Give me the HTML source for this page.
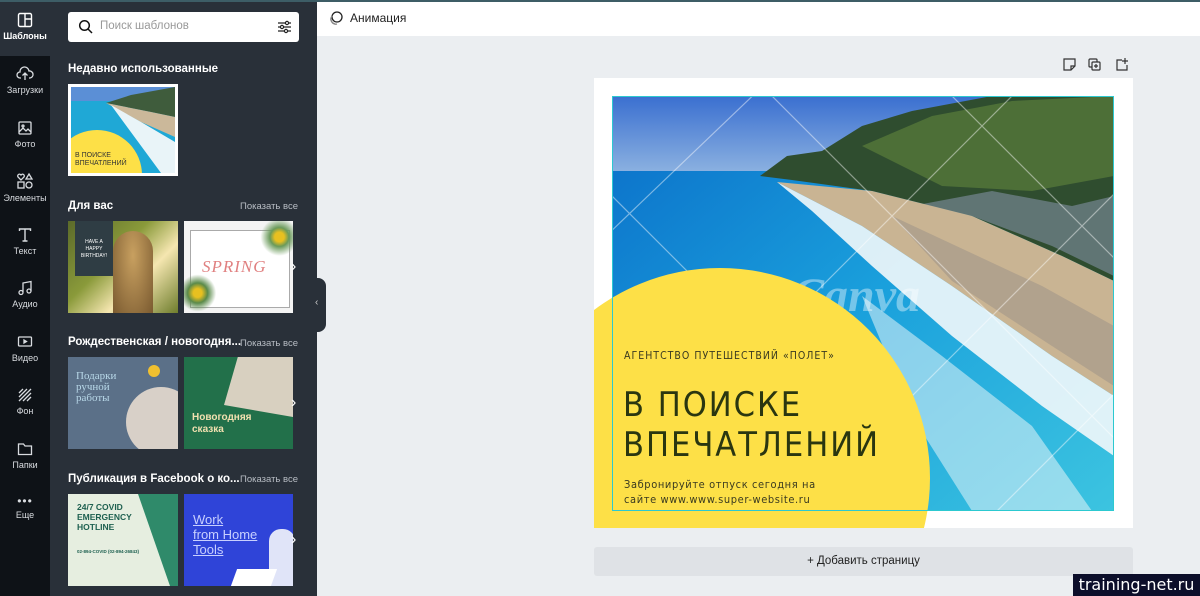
<!DOCTYPE html>
<html><head><meta charset="utf-8">
<style>
*{margin:0;padding:0;box-sizing:border-box}
html,body{width:1200px;height:596px;overflow:hidden}
body{position:relative;background:#ebeef1;font-family:"Liberation Sans","DejaVu Sans",sans-serif}
.abs{position:absolute}
#rail{left:0;top:0;width:50px;height:596px;background:#0e1217}
#panel{left:50px;top:0;width:267px;height:596px;background:#293039}
.tab{position:absolute;left:0;width:50px;text-align:center;color:#d9dce0;font-size:9px}
.tab svg{display:block;margin:0 auto 3px}
.h{position:absolute;left:68px;color:#fff;font-weight:bold;font-size:11.5px}
.sa{position:absolute;left:240px;color:#b8bdc4;font-size:9.5px}
.th{position:absolute;width:110px;height:92px;overflow:hidden}
.arr{position:absolute;left:291px;color:#fff;font-size:16px;line-height:16px}
</style></head><body>
<div class="abs" style="left:0;top:0;width:1200px;height:2px;background:#3d5d66;z-index:5"></div>
<div id="rail" class="abs"></div>
<div class="abs" style="left:0;top:0;width:50px;height:56px;background:#293039"></div>
<div class="abs" style="left:0;top:56px;width:50px;height:10px;background:#0e1217;border-top-right-radius:8px"></div>
<div id="panel" class="abs"></div>

<div class="tab" style="top:12px;color:#fff;font-weight:bold"><svg width="16" height="16" viewBox="0 0 16 16" fill="none" stroke="#fff" stroke-width="1.4"><rect x="1.5" y="1.5" width="13" height="13" rx="1.5"/><path d="M8 1.5v13M8 7h6.5"/></svg>Шаблоны</div>
<div class="tab" style="top:66px"><svg width="18" height="16" viewBox="0 0 18 16" fill="none" stroke="#d9dce0" stroke-width="1.3"><path d="M5 12H4a3 3 0 0 1 0-6 4.5 4.5 0 0 1 9-1 3.5 3.5 0 0 1 1 7h-1M9 14V7M6.5 9.5L9 7l2.5 2.5"/></svg>Загрузки</div>
<div class="tab" style="top:120px"><svg width="16" height="16" viewBox="0 0 16 16" fill="none" stroke="#d9dce0" stroke-width="1.3"><rect x="2" y="2" width="12" height="12" rx="1"/><path d="M2 12l4-4 3 3 2-2 3 3"/><circle cx="6" cy="6" r="1"/></svg>Фото</div>
<div class="tab" style="top:172px"><svg width="18" height="18" viewBox="0 0 18 18" fill="none" stroke="#d9dce0" stroke-width="1.3"><path d="M5 8L2 5a1.8 1.8 0 0 1 3-2 1.8 1.8 0 0 1 3 2z"/><path d="M13 2l3 5h-6z"/><rect x="2" y="10" width="6" height="6"/><circle cx="13" cy="13" r="3"/></svg>Элементы</div>
<div class="tab" style="top:227px"><svg width="16" height="16" viewBox="0 0 16 16" fill="none" stroke="#d9dce0" stroke-width="1.4"><path d="M2.5 4V2h11v2M8 2v12M5.5 14h5"/></svg>Текст</div>
<div class="tab" style="top:280px"><svg width="16" height="16" viewBox="0 0 16 16" fill="none" stroke="#d9dce0" stroke-width="1.3"><path d="M6 12V3l8-1.5V11"/><circle cx="4" cy="12.5" r="2"/><circle cx="12" cy="11" r="2"/></svg>Аудио</div>
<div class="tab" style="top:334px"><svg width="16" height="16" viewBox="0 0 16 16" fill="none" stroke="#d9dce0" stroke-width="1.3"><rect x="1.5" y="3" width="13" height="9" rx="1"/><path d="M7 6v3l2.5-1.5z" fill="#d9dce0"/></svg>Видео</div>
<div class="tab" style="top:387px"><svg width="16" height="16" viewBox="0 0 16 16" fill="none" stroke="#d9dce0" stroke-width="1.3"><path d="M2 6l4-4M2 10l8-8M2 14L14 2M6 14l8-8M10 14l4-4"/></svg>Фон</div>
<div class="tab" style="top:441px"><svg width="16" height="16" viewBox="0 0 16 16" fill="none" stroke="#d9dce0" stroke-width="1.3"><path d="M1.5 3h5l1.5 2h6.5v8.5h-13z"/></svg>Папки</div>
<div class="tab" style="top:494px"><div style="font-size:12px;letter-spacing:1px;line-height:14px;margin-bottom:2px">•••</div>Еще</div>

<div class="abs" style="left:68px;top:12px;width:231px;height:30px;background:#fff;border-radius:3px"></div>
<svg class="abs" style="left:78px;top:19px" width="16" height="16" viewBox="0 0 16 16" fill="none" stroke="#111" stroke-width="1.5"><circle cx="6.5" cy="6.5" r="4.8"/><path d="M10 10l4 4"/></svg>
<div class="abs" style="left:100px;top:20px;font-size:11.5px;color:#999">Поиск шаблонов</div>
<svg class="abs" style="left:277px;top:20px" width="15" height="14" viewBox="0 0 15 14" fill="none" stroke="#222" stroke-width="1.2"><path d="M1 3h13M1 7h13M1 11h13"/><circle cx="10" cy="3" r="1.6" fill="#fff"/><circle cx="5" cy="7" r="1.6" fill="#fff"/><circle cx="9" cy="11" r="1.6" fill="#fff"/></svg>

<div class="h" style="top:63px">Недавно использованные</div>
<div class="th" style="left:68px;top:84px;height:92px;background:#fff;padding:3px">
 <svg width="104" height="86" viewBox="0 0 104 86"><rect width="104" height="86" fill="#1fa8d6"/><rect width="104" height="14" fill="#5b8fd6"/><path d="M35 16L60 8 104 0V30L80 25z" fill="#3f5c3c"/><path d="M35 16L80 25 104 30V50L70 35z" fill="#cbb89a"/><path d="M40 18L70 35 104 55V86H90z" fill="#e9f4f8"/><circle cx="26" cy="88" r="45" fill="#fde047"/><text x="4" y="70" font-size="7" fill="#333" font-family="Liberation Sans">В ПОИСКЕ</text><text x="4" y="78" font-size="7" fill="#333" font-family="Liberation Sans">ВПЕЧАТЛЕНИЙ</text></svg>
</div>

<div class="h" style="top:200px">Для вас</div><div class="sa" style="top:201px">Показать все</div>
<div class="th" style="left:68px;top:221px;background:linear-gradient(135deg,#5b6a2a,#8a9a3a 40%,#f5e6b0 65%,#6e7d2c)"><div style="position:absolute;left:45px;top:10px;width:40px;height:82px;background:radial-gradient(ellipse at 50% 30%,#c8a060,#7a5a30);border-radius:20px 20px 0 0"></div><div style="position:absolute;left:7px;top:0;width:38px;height:55px;background:#2f3d44;color:#fff;font-size:5px;text-align:center;padding-top:18px;line-height:7px">HAVE A<br>HAPPY<br>BIRTHDAY!</div></div>
<div class="th" style="left:184px;top:221px;width:109px;background:#f4f4f4"><div style="position:absolute;left:6px;top:9px;width:100px;height:78px;border:1px solid #aaa;background:#fff"></div><div style="position:absolute;left:18px;top:36px;color:#e08080;font-family:'Liberation Serif',serif;font-style:italic;font-size:17px;letter-spacing:1px">SPRING</div><div style="position:absolute;left:75px;top:0;width:34px;height:40px;background:radial-gradient(circle at 60% 40%,#e8c020 15%,#6a9a5a 30%,transparent 60%)"></div><div style="position:absolute;left:0;top:52px;width:34px;height:40px;background:radial-gradient(circle at 40% 50%,#e8c020 15%,#5a8a4a 35%,transparent 65%)"></div></div>
<div class="arr" style="top:259px">›</div>

<div class="h" style="top:336px">Рождественская / новогодня...</div><div class="sa" style="top:338px">Показать все</div>
<div class="th" style="left:68px;top:357px;background:#5b7088"><div style="position:absolute;left:58px;top:30px;width:70px;height:70px;border-radius:50%;background:#d8d0c8"></div><div style="position:absolute;left:80px;top:8px;width:12px;height:12px;border-radius:50%;background:#f0c030"></div><div style="position:absolute;left:8px;top:14px;color:#b8d8e8;font-family:'Liberation Serif',serif;font-size:11px;line-height:11px">Подарки<br>ручной<br>работы</div></div>
<div class="th" style="left:184px;top:357px;width:109px;background:#22704a"><div style="position:absolute;left:40px;top:0;width:69px;height:60px;background:#d8d0c0;clip-path:polygon(20% 0,100% 0,100% 100%,0 80%)"></div><div style="position:absolute;left:8px;top:55px;color:#f2e0b0;font-weight:bold;font-size:10px;line-height:12px">Новогодняя<br>сказка</div></div>
<div class="arr" style="top:395px">›</div>

<div class="h" style="top:473px">Публикация в Facebook о ко...</div><div class="sa" style="top:474px">Показать все</div>
<div class="th" style="left:68px;top:494px;background:#e6eee0"><div style="position:absolute;left:70px;top:0;width:40px;height:92px;background:#2f8a6a;clip-path:polygon(0 0,100% 0,100% 100%,80% 100%)"></div><div style="position:absolute;left:9px;top:8px;color:#1e6050;font-weight:bold;font-size:8.5px;line-height:10px">24/7 COVID<br>EMERGENCY<br>HOTLINE</div><div style="position:absolute;left:9px;top:55px;color:#1e6050;font-size:4.5px;font-weight:bold">02-894-COVID (02-894-26843)</div></div>
<div class="th" style="left:184px;top:494px;width:109px;background:#2f44d8"><div style="position:absolute;left:9px;top:18px;color:#c8d0ff;font-size:13px;line-height:15px;text-decoration:underline">Work<br>from Home<br>Tools</div><div style="position:absolute;left:85px;top:35px;width:26px;height:57px;background:#e0e4f8;border-radius:12px 12px 0 0"></div><div style="position:absolute;left:50px;top:75px;width:40px;height:17px;background:#fff;transform:skewX(-20deg)"></div></div>
<div class="arr" style="top:532px">›</div>

<div class="abs" style="left:312px;top:278px;width:14px;height:54px;background:#293039;border-radius:0 8px 8px 0"></div>
<div class="abs" style="left:315px;top:298px;color:#ccc;font-size:10px;line-height:10px">‹</div>

<div class="abs" style="left:317px;top:2px;width:883px;height:34px;background:#fff"></div>
<svg class="abs" style="left:328px;top:10px" width="16" height="16" viewBox="0 0 16 16" fill="none" stroke="#222" stroke-width="1.3"><circle cx="9" cy="7" r="5"/><path d="M4 6a5 5 0 0 0 5 8M3 8.5a5 5 0 0 0 4 5.5" stroke="#888"/></svg>
<div class="abs" style="left:350px;top:11px;font-size:12px;color:#222">Анимация</div>

<svg class="abs" style="left:1062px;top:57px" width="70" height="16" viewBox="0 0 70 16" fill="none" stroke="#333" stroke-width="1.2"><path d="M2 2h11v7l-4 4H2z M9 13v-4h4"/><rect x="27" y="2" width="8" height="8" rx="1"/><rect x="30" y="5" width="8" height="8" rx="1" fill="#ebeef1"/><path d="M34 7v4M32 9h4"/><path d="M60 3h-5v10h10V8M63 1v6M60 4h6"/></svg>

<div class="abs" style="left:594px;top:78px;width:539px;height:450px;background:#fff;overflow:hidden">
 <svg class="abs" style="left:18px;top:18px" width="502" height="415" viewBox="0 0 502 415">
  <defs><linearGradient id="sky" x1="0" y1="0" x2="0" y2="1"><stop offset="0" stop-color="#3a6fd0"/><stop offset="1" stop-color="#8ab0e0"/></linearGradient>
  <linearGradient id="sea" x1="0" y1="0" x2="1" y2="1"><stop offset="0" stop-color="#0a6cc8"/><stop offset=".5" stop-color="#1aa0dc"/><stop offset="1" stop-color="#3cc4e0"/></linearGradient></defs>
  <rect width="502" height="415" fill="url(#sea)"/>
  <rect width="502" height="75" fill="url(#sky)"/>
  <path d="M148 80L175 60 210 55 250 30 300 15 380 0 502 0 502 185 450 160 360 120 260 95 180 84z" fill="#2f4d2f"/>
  <path d="M250 50L320 20 400 5 502 0 502 80 420 95 330 90z" fill="#5a7e3a" opacity=".7"/>
  <path d="M300 110L380 95 460 110 502 100 502 180 440 150 360 120z" fill="#6d7f86" opacity=".8"/>
  <path d="M165 86L260 95 360 120 450 160 502 185 502 300 440 260 340 190 250 130z" fill="#c9b493"/>
  <path d="M280 120L430 190 502 230 502 290 440 250 340 185z" fill="#9a8f88" opacity=".5"/>
  <path d="M165 86L250 130 340 190 440 260 502 300 502 360 430 310 340 240 260 170 200 115z" fill="#eef6fa" opacity=".92"/>
  <path d="M250 200L330 260 420 330 480 415 360 415 300 320z" fill="#e4f4f8" opacity=".55"/>
  <g stroke="#fff" stroke-opacity=".45" stroke-width="1.2" fill="none"><path d="M-100 0L315 415M60 -100L575 415M240 -100L700 360M-100 230L245 -100M-100 500L500 -100M100 500L600 0M300 500L650 150"/></g>
  <text x="180" y="215" font-family="Liberation Serif" font-style="italic" font-weight="bold" font-size="48" fill="#fff" fill-opacity=".4">Canva</text>
 </svg>
 <div class="abs" style="left:-84px;top:190px;width:420px;height:420px;border-radius:50%;background:#fde047"></div>
 <div class="abs" style="left:18px;top:18px;width:502px;height:415px;border:1.5px solid #2cc9d0"></div>
 <div class="abs" style="left:30px;top:272px;font-size:10.5px;color:#3a3a20;letter-spacing:1px;font-family:'DejaVu Sans Condensed','DejaVu Sans',sans-serif">АГЕНТСТВО ПУТЕШЕСТВИЙ «ПОЛЕТ»</div>
 <div class="abs" style="left:29px;top:307px;font-size:34px;line-height:40px;color:#2a3610;letter-spacing:2px;font-family:'DejaVu Sans Condensed','DejaVu Sans',sans-serif">В ПОИСКЕ<br>ВПЕЧАТЛЕНИЙ</div>
 <div class="abs" style="left:30px;top:399px;font-size:11px;line-height:15px;color:#3a3a20;letter-spacing:.6px;font-family:'DejaVu Sans Condensed','DejaVu Sans',sans-serif">Забронируйте отпуск сегодня на<br>сайте www.www.super-website.ru</div>
</div>

<div class="abs" style="left:594px;top:547px;width:539px;height:29px;background:#dfe2e6;border-radius:3px;text-align:center;line-height:29px;font-size:11.5px;color:#222">+ Добавить страницу</div>

<div class="abs" style="left:1073px;top:574px;width:127px;height:22px;background:#0c0e2a;color:#fff;font-size:16px;line-height:22px;text-align:center;font-family:'DejaVu Sans',sans-serif">training-net.ru</div>
</body></html>
